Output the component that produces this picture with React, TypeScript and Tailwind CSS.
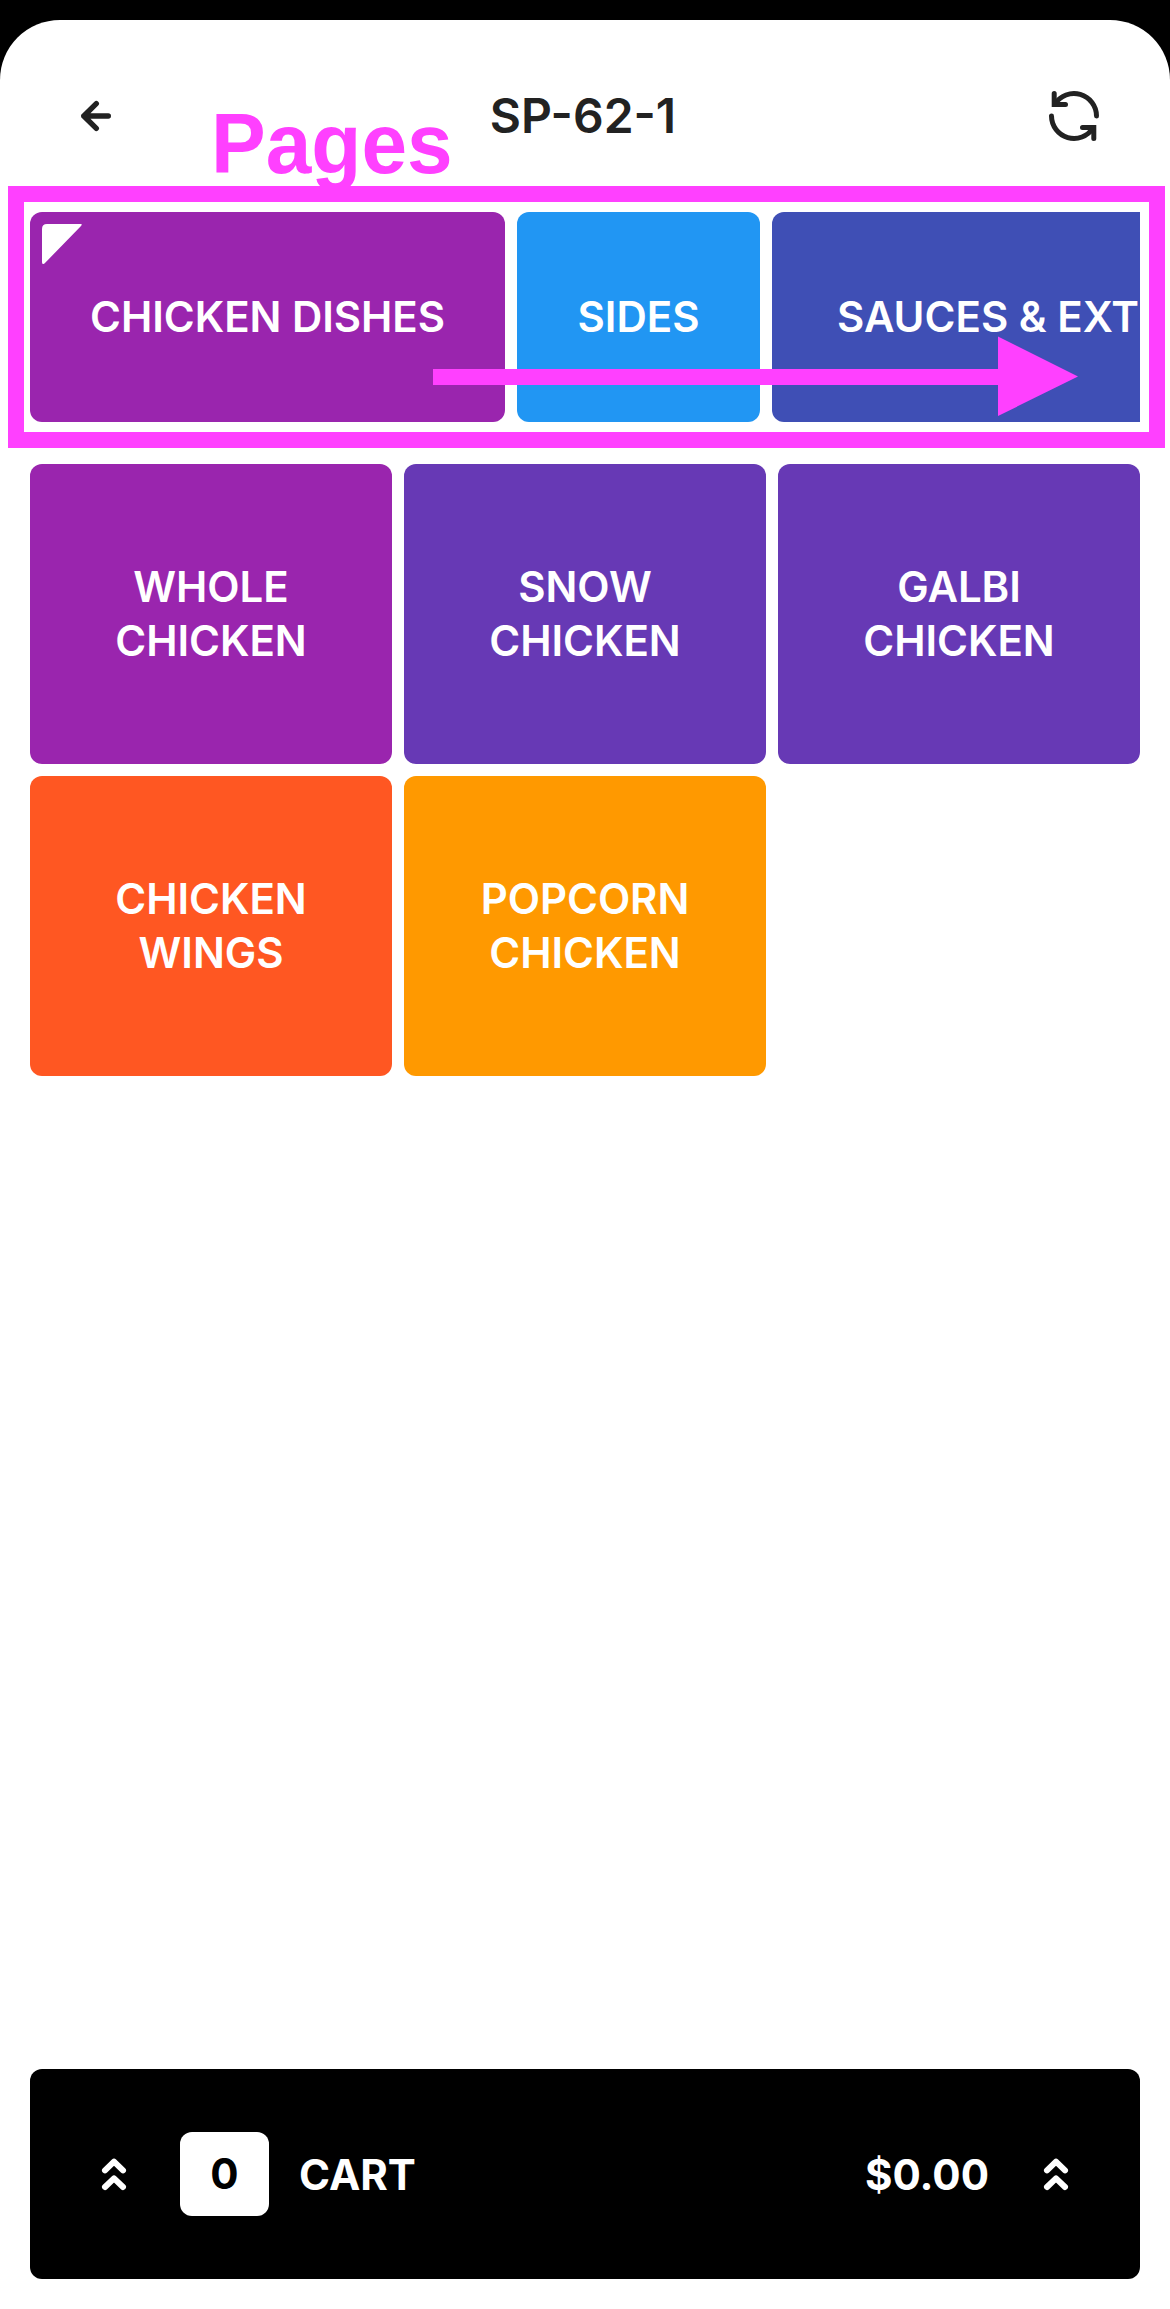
import React from 'react';

const pages = [
  { label: 'CHICKEN DISHES', tone: 'w-[475px] bg-[#9a25ae] tracking-[-0.05px]', active: true },
  { label: 'SIDES', tone: 'w-[243px] bg-[#2196f3]', active: false },
  { label: 'SAUCES & EXTRAS', tone: 'bg-[#3f4fb5] px-[65px]', active: false },
];

const items = [
  { lines: ['WHOLE', 'CHICKEN'], tone: 'bg-[#9a25ae]' },
  { lines: ['SNOW', 'CHICKEN'], tone: 'bg-[#6739b5]' },
  { lines: ['GALBI', 'CHICKEN'], tone: 'bg-[#6739b5]' },
  { lines: ['CHICKEN', 'WINGS'], tone: 'bg-[#ff5722]' },
  { lines: ['POPCORN', 'CHICKEN'], tone: 'bg-[#ff9900]' },
];

function BackIcon() {
  return (
    <svg className="size-12" viewBox="0 0 48 48" fill="none" stroke="#222222" strokeWidth="5.4" strokeLinecap="round" strokeLinejoin="round">
      <path d="M36.300 24H11.800M24.300 11.700L11.800 24L24.300 36.300" />
    </svg>
  );
}

function RefreshIcon() {
  return (
    <svg className="size-[68px]" viewBox="0 0 68 68" fill="none" stroke="#222222" strokeWidth="5" strokeLinecap="round">
      <path d="M56.500 34A22.500 22.500 0 0 0 15 22" />
      <path d="M14.200 11.500V22.600H25.500" />
      <path d="M11.500 34A22.500 22.500 0 0 0 53 46" />
      <path d="M42.500 45.400H53.800V56.500" />
    </svg>
  );
}

function ExpandIcon() {
  return (
    <svg className="h-12 w-9" viewBox="0 0 36 48" fill="none" stroke="white" strokeWidth="6" strokeLinecap="round" strokeLinejoin="round">
      <path d="M9 20.300L18 11.600L27 20.300M9 37L18 28.400L27 37" />
    </svg>
  );
}

export default function App() {
  return (
    <div className="h-[2309px] w-[1170px] overflow-hidden bg-black pt-5 font-['Inter',sans-serif]">
      <main className="relative flex h-[2289px] flex-col rounded-t-[60px] bg-white px-[30px]">
        <header className="flex h-48 items-center justify-between pr-8 pl-[42px]">
          <button className="flex w-[68px]" aria-label="Back">
            <BackIcon />
          </button>
          <h1 className="-ml-[14px] text-[48px] leading-[60px] font-semibold text-[#222222]">SP-62-1</h1>
          <button aria-label="Refresh">
            <RefreshIcon />
          </button>
        </header>

        <nav className="flex h-[210px] gap-3 overflow-hidden text-[42px] leading-[54px] font-semibold text-white">
          {pages.map((page) => (
            <button key={page.label} className={`relative h-full shrink-0 rounded-xl whitespace-nowrap ${page.tone}`}>
              {page.active && (
                <svg className="absolute top-3 left-3 size-10" viewBox="0 0 40 40" fill="white">
                  <path d="M5 0H38.500Q41 0 39 2L3 39Q0 41.500 0 38V5Q0 0 5 0Z" />
                </svg>
              )}
              {page.label}
            </button>
          ))}
        </nav>

        <section className="mt-[42px] grid grid-cols-3 gap-3 text-[42px] leading-[54px] font-semibold tracking-[-0.05px] text-white">
          {items.map((item) => (
            <button key={item.lines.join(' ')} className={`flex h-[300px] flex-col items-center justify-center rounded-xl ${item.tone}`}>
              {item.lines.map((line) => (
                <span key={line}>{line}</span>
              ))}
            </button>
          ))}
        </section>

        <footer className="mt-auto mb-[30px] flex h-[210px] items-center rounded-xl bg-black px-[66px] text-[42px] leading-[54px] font-bold text-white">
          <ExpandIcon />
          <span className="ml-12 flex h-[84px] w-[89px] items-center justify-center rounded-xl bg-white text-black">0</span>
          <span className="ml-[30px] pt-0.5">CART</span>
          <span className="mr-[49px] ml-auto pt-0.5">$0.00</span>
          <ExpandIcon />
        </footer>

        <span className="absolute top-[77px] left-[211px] origin-[0_76px] scale-y-[1.045] font-['Liberation_Sans',sans-serif] text-[82px] leading-[96px] font-bold text-[#ff40ff]">Pages</span>
        <div className="absolute top-[166px] left-2 h-[262px] w-[1157px] border-[16px] border-[#ff40ff]" />
        <svg className="absolute top-[316px] left-[433px] h-20 w-[645px]" viewBox="0 0 645 80" fill="#ff40ff">
          <path d="M0 33H565V0.500L645 40.500L565 80V49H0Z" />
        </svg>
      </main>
    </div>
  );
}
